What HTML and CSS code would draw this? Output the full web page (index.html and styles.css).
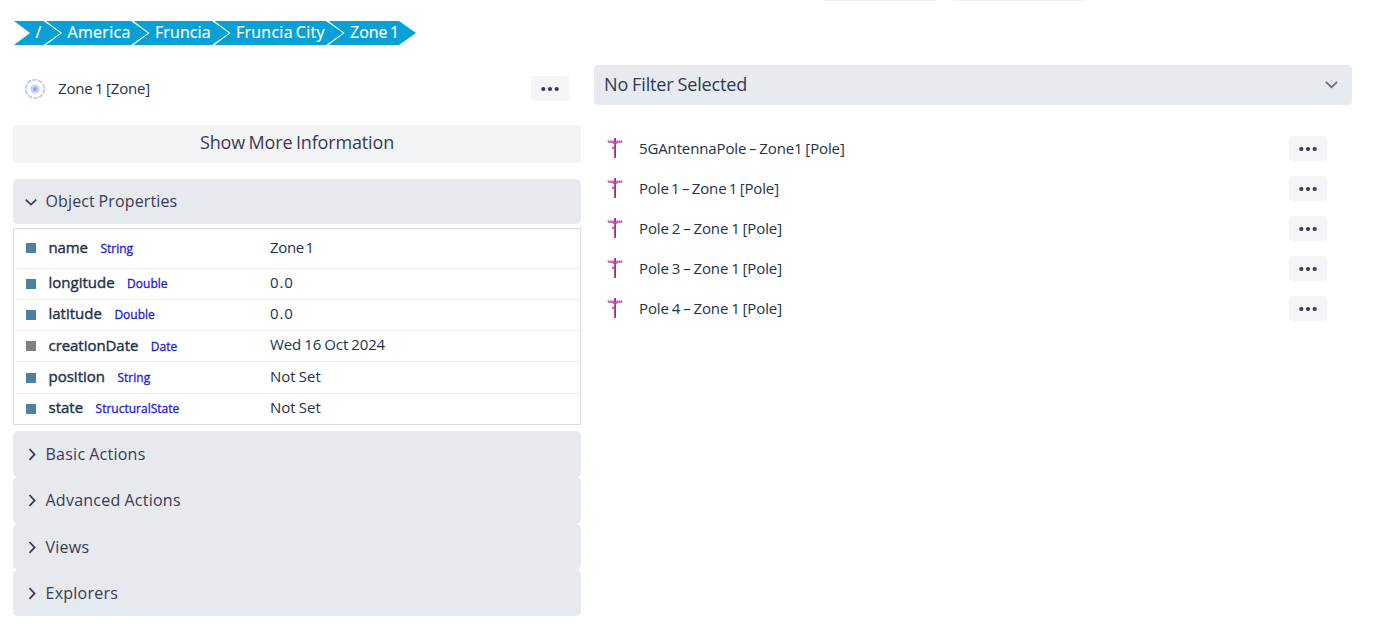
FILE: index.html
```html
<!DOCTYPE html>
<html lang="en">
<head>
<meta charset="utf-8">
<title>Zone 1</title>
<link rel="stylesheet" href="styles.css">
</head>
<body>
<svg class="defs" width="0" height="0">
  <symbol id="pole" viewBox="0 0 16 20">
    <path d="M8.100 0v20" stroke="#a2288c" stroke-width="1.8" fill="none"/>
    <path d="M1 4h14" stroke="#b04a9f" stroke-width="1.5"/>
    <path d="M1.2 2v2.5M3.7 2v2.5M6 2v2.5M10.2 2v2.5M12.6 2v2.5M14.8 2v2.5" stroke="#c277b6" stroke-width="1.1"/>
    <path d="M5 4.500L8 6.500l3-2" stroke="#bd69ae" stroke-width="1" fill="none"/>
    <path d="M4.800 8.800h2.700v2.300H5z" fill="#bd69ae"/>
  </symbol>
  <symbol id="dots" viewBox="0 0 18 6">
    <circle cx="2.3" cy="3" r="2.1"/><circle cx="9" cy="3" r="2.1"/><circle cx="15.7" cy="3" r="2.1"/>
  </symbol>
  <symbol id="chevron" viewBox="0 0 14 14">
    <path d="M1.7 4.6L7 9.5l5.300-4.900" fill="none" stroke="currentColor" stroke-width="1.700"/>
  </symbol>
  <symbol id="chevron-right" viewBox="0 0 14 14">
    <path d="M4.500 2L9.500 7.500l-5 5.300" fill="none" stroke="currentColor" stroke-width="1.800"/>
  </symbol>
</svg>
<div class="tabs-edge"><i class="edge-a"></i><i class="edge-b"></i></div>
<nav class="crumbs">
  <a class="crumb root">/</a><a class="crumb america">America</a><a class="crumb fruncia">Fruncia</a><a class="crumb city">Fruncia City</a><a class="crumb zone">Zone 1</a>
</nav>
<main class="columns">
  <section class="left">
    <div class="object-head">
      <svg class="zone-icon" viewBox="0 0 22 22"><circle cx="11" cy="11" r="9.200" fill="none" stroke="#bfc9ee" stroke-width="1.800" stroke-dasharray="4.500 1.280"/><circle cx="11" cy="11" r="4.600" fill="#c8d1f2"/><circle cx="11" cy="11" r="2" fill="#91a4df"/></svg>
      <span class="item-name head-name">Zone 1 [Zone]</span>
      <button class="more"><svg><use href="#dots"/></svg></button>
    </div>
    <button class="show-more"><span>Show More Information</span></button>
    <div class="panel-head open"><svg><use href="#chevron"/></svg><span>Object Properties</span></div>
    <div class="props">
      <div class="row first"><i class="mark"></i><div class="key"><b class="k-name">name</b><em>String</em></div><span class="v-zone">Zone 1</span></div>
      <div class="row"><i class="mark"></i><div class="key"><b>longitude</b><em>Double</em></div><span class="v-num">0.0</span></div>
      <div class="row"><i class="mark"></i><div class="key"><b>latitude</b><em>Double</em></div><span class="v-num">0.0</span></div>
      <div class="row"><i class="mark gray"></i><div class="key"><b class="k-creation">creationDate</b><em>Date</em></div><span class="v-date">Wed 16 Oct 2024</span></div>
      <div class="row"><i class="mark"></i><div class="key"><b>position</b><em>String</em></div><span class="v-not">Not Set</span></div>
      <div class="row"><i class="mark"></i><div class="key"><b>state</b><em>StructuralState</em></div><span class="v-not">Not Set</span></div>
    </div>
    <div class="panels">
      <div class="panel-head"><svg><use href="#chevron-right"/></svg><span>Basic Actions</span></div>
      <div class="panel-head"><svg><use href="#chevron-right"/></svg><span>Advanced Actions</span></div>
      <div class="panel-head"><svg><use href="#chevron-right"/></svg><span>Views</span></div>
      <div class="panel-head"><svg><use href="#chevron-right"/></svg><span>Explorers</span></div>
    </div>
  </section>
  <section class="right">
    <div class="filter"><span>No Filter Selected</span><svg><use href="#chevron"/></svg></div>
    <div class="list">
      <div class="item"><svg class="pole"><use href="#pole"/></svg><span class="item-name antenna">5GAntennaPole – Zone1 [Pole]</span><button class="more"><svg><use href="#dots"/></svg></button></div>
      <div class="item"><svg class="pole"><use href="#pole"/></svg><span class="item-name pole-1">Pole 1 – Zone 1 [Pole]</span><button class="more"><svg><use href="#dots"/></svg></button></div>
      <div class="item"><svg class="pole"><use href="#pole"/></svg><span class="item-name">Pole 2 – Zone 1 [Pole]</span><button class="more"><svg><use href="#dots"/></svg></button></div>
      <div class="item"><svg class="pole"><use href="#pole"/></svg><span class="item-name">Pole 3 – Zone 1 [Pole]</span><button class="more"><svg><use href="#dots"/></svg></button></div>
      <div class="item"><svg class="pole"><use href="#pole"/></svg><span class="item-name">Pole 4 – Zone 1 [Pole]</span><button class="more"><svg><use href="#dots"/></svg></button></div>
    </div>
  </section>
</main>
</body>
</html>
```
FILE: styles.css
```css
* { box-sizing: border-box; }
body {
  margin: 0;
  width: 1376px;
  height: 630px;
  overflow: hidden;
  background: #fff;
  color: #233348;
  font-family: "Open Sans", "Noto Sans", sans-serif;
  font-weight: 400;
  font-size: 15px;
}
button { border: 0; padding: 0; margin: 0; font: inherit; color: inherit; }
svg { display: block; flex: none; }
.defs { position: absolute; }
.tabs-edge { display: flex; gap: 17px; height: 21px; padding-left: 824px; }
.tabs-edge i { height: 1px; background: #f1f2f3; }
.edge-a { width: 112px; }
.edge-b { width: 131px; }

.crumbs { display: flex; height: 24px; padding-left: 14px; }
.crumb {
  flex: none;
  height: 24px;
  margin-left: -14.500px;
  padding-left: 21.500px;
  background: #08a0d5;
  color: #fff;
  font-size: 16px;
  line-height: 22px;
  white-space: nowrap;
  -webkit-text-stroke: 0.2px #fff;
  clip-path: polygon(0 0, calc(100% - 17px) 0, 100% 50%, calc(100% - 17px) 100%, 0 100%, 16px 50%);
}
.root { width: 46.500px; margin-left: 0; }
.america { width: 102px; letter-spacing: 0.3px; }
.fruncia { width: 95.500px; letter-spacing: 0.100px; }
.city { width: 128.500px; letter-spacing: 0.250px; word-spacing: -1.300px; }
.zone { width: 87.500px; word-spacing: -1.800px; }

.columns { display: flex; gap: 13px; padding-left: 13px; padding-top: 20px; }
.left { width: 568px; }
.right { width: 758px; }
.object-head { display: flex; align-items: center; height: 48px; padding: 0 12px 1px 11px; }
.zone-icon { width: 22px; height: 22px; margin-top: 1px; }
.item-name { font-size: 15px; line-height: 20px; white-space: nowrap; letter-spacing: -0.100px; word-spacing: -0.900px; }
.head-name { margin: -1px 0 0 12px; letter-spacing: -0.150px; word-spacing: -1.300px; }
.antenna { letter-spacing: -0.130px; }
.pole-1 { letter-spacing: -0.150px; word-spacing: -1.300px; }
.more {
  display: flex;
  align-items: center;
  justify-content: center;
  width: 38px;
  height: 25px;
  margin-left: auto;
  border-radius: 4px;
  background: #f4f5f7;
}
.more svg { width: 18px; height: 6px; fill: #3a3853; }
.show-more {
  display: block;
  width: 568px;
  height: 38px;
  margin-top: 12px;
  padding-bottom: 4px;
  border-radius: 4px;
  background: #f3f4f6;
  color: #3b3a55;
  font-size: 18px;
  letter-spacing: -0.150px;
  word-spacing: -1px;
}
.panel-head {
  display: flex;
  align-items: center;
  height: 46.300px;
  padding-left: 12px;
  border-radius: 5px;
  background: #e6e9ee;
  color: #3b3a55;
  font-size: 16px;
}
.panel-head svg { width: 14px; height: 14px; color: #3a3853; }
.panel-head span { margin-left: 6.500px; white-space: nowrap; word-spacing: -0.500px; letter-spacing: 0.250px; }
.panel-head.open { height: 45px; margin-top: 16px; padding: 0 0 2px 11px; }
.panel-head.open svg { margin-top: 2px; }
.panel-head.open span { margin-left: 7.500px; letter-spacing: 0.120px; }
.props { margin-top: 4px; border: 1px solid #d9dde1; height: 197px; }
.row { display: flex; align-items: center; height: 31.300px; padding-left: 12px; border-top: 1px solid #eceef0; }
.row.first { height: 38.500px; border-top: 0; }
.mark { flex: none; width: 10px; height: 10px; background: #4b81a1; }
.mark.gray { background: #808080; }
.key { flex: none; display: flex; align-items: baseline; width: 234px; padding: 0 0 3px 12.500px; }
.key b { font-weight: 400; font-size: 15px; white-space: nowrap; -webkit-text-stroke: 0.400px #233348; }
.key .k-name { letter-spacing: -0.100px; }
.key .k-creation { letter-spacing: -0.050px; }
.key em { margin-left: 12.500px; color: #1b20cf; font-style: normal; font-size: 12px; white-space: nowrap; -webkit-text-stroke: 0.300px #1b20cf; }
.row.first .key, .row.first > span { padding-bottom: 2px; }
.row > span { padding-bottom: 3px; font-size: 15px; white-space: nowrap; }
.row .v-zone { word-spacing: -1.800px; letter-spacing: -0.350px; }
.row .v-num { letter-spacing: 0.900px; }
.row .v-date { padding-bottom: 4px; word-spacing: -0.500px; letter-spacing: -0.150px; }
.row .v-not { word-spacing: -0.500px; letter-spacing: -0.050px; }
.panels { margin-top: 6px; }

.filter {
  display: flex;
  align-items: center;
  justify-content: space-between;
  height: 40px;
  padding: 0 13px 2px 10px;
  border-radius: 4px;
  background: #e7eaef;
  color: #2b3b50;
  font-size: 18px;
}
.filter span { letter-spacing: -0.150px; word-spacing: -0.500px; }
.filter svg { width: 15px; height: 15px; color: #64748b; }
.list { padding: 23px 25px 0 13px; }
.item { display: flex; align-items: center; height: 40px; }
.item .pole { width: 16px; height: 20px; }
.item .item-name { margin-left: 16px; }
.item .more { padding-top: 1px; }
```
